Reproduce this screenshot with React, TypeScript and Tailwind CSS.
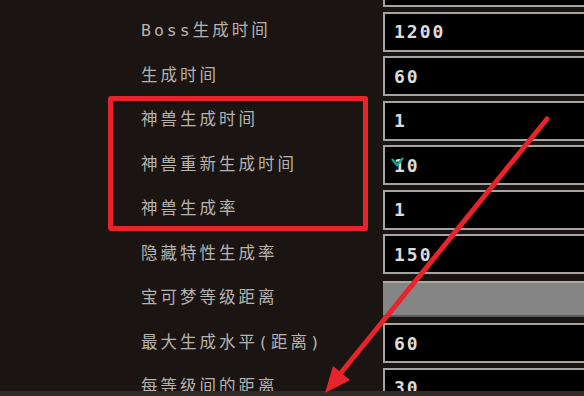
const rows: { label: string; value: string; kind?: "slider" }[] = [
  { label: "Boss生成时间", value: "1200" },
  { label: "生成时间", value: "60" },
  { label: "神兽生成时间", value: "1" },
  { label: "神兽重新生成时间", value: "10" },
  { label: "神兽生成率", value: "1" },
  { label: "隐藏特性生成率", value: "150" },
  { label: "宝可梦等级距离", value: "", kind: "slider" },
  { label: "最大生成水平(距离)", value: "60" },
  { label: "每等级间的距离", value: "30" },
];

const labelFont = { fontFamily: '"DejaVu Sans Mono", "Noto Sans CJK SC", monospace' };
const valueFont = { fontFamily: '"DejaVu Sans Mono", "Liberation Mono", monospace' };

function Field({ value, kind, cursor }: { value: string; kind?: "slider"; cursor?: boolean }) {
  if (kind === "slider") {
    return (
      <div className="h-[36px] w-[220px] shrink-0 border-t-2 border-[#a9a9a9] bg-[#858585] border-b-2 border-b-[#5a5a5a]" />
    );
  }
  return (
    <div className="relative flex h-[40px] w-[220px] shrink-0 items-center border-2 border-[#a4a4a4] bg-black pl-[9px]">
      <span className="text-[18px] font-bold tracking-[2px] text-[#dcdcdc]" style={valueFont}>
        {value}
      </span>
      {cursor && (
        <svg className="absolute left-[6px] top-[10px]" width="14" height="12" viewBox="0 0 14 12">
          <path d="M1 2 L6 8 L12 1" stroke="#1f9e86" strokeWidth="2.5" fill="none" />
        </svg>
      )}
    </div>
  );
}

export default function App() {
  return (
    <div className="relative flex h-[396px] w-[584px] flex-col overflow-hidden bg-[#1a1512]">
      <div className="h-[391px] shrink-0 overflow-hidden">
        <div className="ml-[383px] h-[7px] w-[220px] border-x-2 border-b-2 border-[#a4a4a4] bg-black" />
        <div className="mt-[2.25px] flex flex-col">
          {rows.map((r, i) => (
            <div key={r.label} className="flex h-[44.5px] shrink-0 items-center">
              <div
                className="w-[383px] shrink-0 pl-[141px] whitespace-nowrap text-[16.5px] tracking-[3px] text-[#b6b3b0]"
                style={labelFont}
              >
                {r.label}
              </div>
              <Field value={r.value} kind={r.kind} cursor={i === 3} />
            </div>
          ))}
        </div>
      </div>
      <div className="h-[5px] bg-[#2f2a26]" />

      {/* red annotation box */}
      <div className="absolute left-[108px] top-[96px] h-[135px] w-[260px] rounded-[3px] border-[5px] border-[#e8232b]" />

      {/* red arrow */}
      <svg className="absolute left-0 top-0" width="584" height="396" viewBox="0 0 584 396">
        <line x1="547" y1="119" x2="340" y2="374" stroke="#e8232b" strokeWidth="5" strokeLinecap="round" />
        <polygon points="325,393 350,380 333,366" fill="#e8232b" />
      </svg>
    </div>
  );
}
